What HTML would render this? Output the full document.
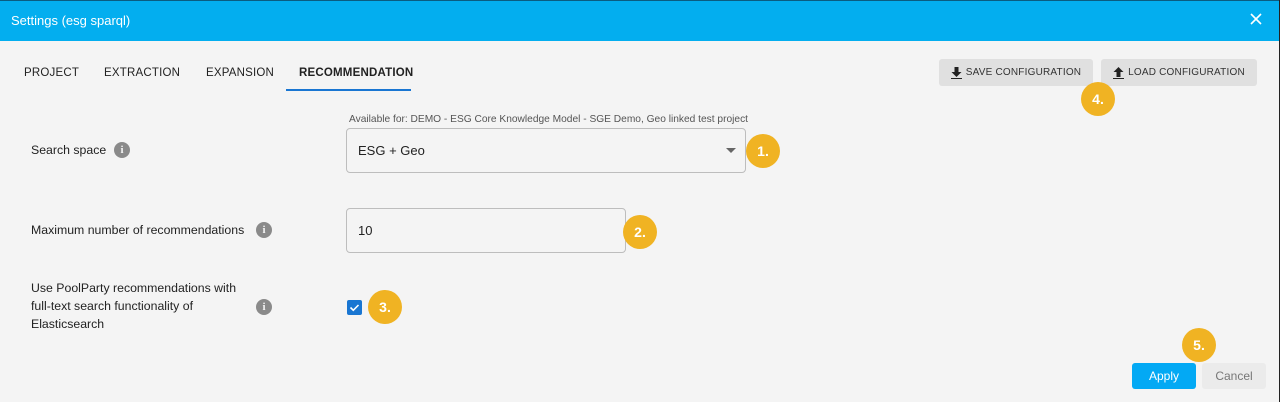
<!DOCTYPE html>
<html><head><style>
*{margin:0;padding:0;box-sizing:border-box}
body{width:1280px;height:402px;background:#f4f4f4;font-family:"Liberation Sans",Arial,sans-serif;position:relative;overflow:hidden;color:#222}
.a{position:absolute}
.hdr{left:0;top:0;width:1280px;height:41px;background:#03aeef;border-top:1px solid #0a5c80}
.tab{top:67px;font-size:11.5px;color:#222;letter-spacing:.2px}
.btn{top:59px;height:27px;background:#e0e0e0;border-radius:3px;font-size:10px;color:#333;display:flex;align-items:center;justify-content:center;gap:4px;letter-spacing:.2px}
.badge{width:34px;height:34px;border-radius:50%;background:#f0b323;color:#fff;font-weight:bold;font-size:14px;display:flex;align-items:center;justify-content:center}
.lbl{font-size:12.3px;color:#222;line-height:18px}
.info{width:16px;height:16px;border-radius:50%;background:#8a8a8a;color:#f4f4f4;font-size:11px;font-weight:bold;display:flex;align-items:center;justify-content:center;font-family:"Liberation Serif",serif}
.box{border:1px solid #bdbdbd;border-radius:4px;background:#f4f4f4;font-size:13px;padding-left:11px;display:flex;align-items:center}
</style></head><body>
<div class="a hdr"></div>
<div class="a" style="left:11px;top:13px;font-size:13px;color:#fff">Settings (esg sparql)</div>
<svg class="a" style="left:1250px;top:13px" width="12" height="12" viewBox="0 0 12 12"><path d="M1 1L11 11M11 1L1 11" stroke="#fff" stroke-width="1.6"/></svg>
<div class="a" style="left:1279px;top:0;width:1px;height:402px;background:#222"></div>

<div class="a tab" style="left:24px">PROJECT</div>
<div class="a tab" style="left:104px">EXTRACTION</div>
<div class="a tab" style="left:206px">EXPANSION</div>
<div class="a tab" style="left:299px;font-weight:bold">RECOMMENDATION</div>
<div class="a" style="left:286px;top:89px;width:125px;height:2px;background:#1976d2"></div>

<div class="a btn" style="left:939px;width:154px"><svg width="11" height="12" viewBox="0 0 11 12"><path d="M3.5 0h4v5h3l-5 5-5-5h3z M0 11h11v1H0z" fill="#222"/></svg>SAVE CONFIGURATION</div>
<div class="a btn" style="left:1101px;width:156px"><svg width="11" height="12" viewBox="0 0 11 12"><path d="M3.5 10h4V5h3l-5-5-5 5h3z M0 11h11v1H0z" fill="#222"/></svg>LOAD CONFIGURATION</div>
<div class="a badge" style="left:1081px;top:82px">4.</div>

<div class="a" style="left:349px;top:114px;font-size:10.2px;color:#555">Available for: DEMO - ESG Core Knowledge Model - SGE Demo, Geo linked test project</div>
<div class="a box" style="left:346px;top:128px;width:400px;height:45px">ESG + Geo</div>
<svg class="a" style="left:726px;top:148px" width="10" height="6"><path d="M0 0h10L5 5z" fill="#666"/></svg>
<div class="a badge" style="left:746px;top:134px">1.</div>

<div class="a box" style="left:346px;top:208px;width:280px;height:45px">10</div>
<div class="a badge" style="left:623px;top:215px">2.</div>

<div class="a" style="left:347px;top:300px;width:15px;height:15px;background:#1976d2;border-radius:2px"></div>
<svg class="a" style="left:347px;top:300px" width="15" height="15"><path d="M3.5 7.5l2.8 2.8L11.5 5" stroke="#fff" stroke-width="1.6" fill="none"/></svg>
<div class="a badge" style="left:368px;top:290px">3.</div>

<div class="a lbl" style="left:31px;top:141px">Search space</div>
<div class="a info" style="left:114px;top:142px">i</div>
<div class="a lbl" style="left:31px;top:221px">Maximum number of recommendations</div>
<div class="a info" style="left:256px;top:222px">i</div>
<div class="a lbl" style="left:31px;top:279px">Use PoolParty recommendations with<br>full-text search functionality of<br>Elasticsearch</div>
<div class="a info" style="left:256px;top:299px">i</div>

<div class="a badge" style="left:1182px;top:328px">5.</div>
<div class="a" style="left:1132px;top:363px;width:64px;height:26px;background:#03a9f4;border-radius:3px;color:#fff;font-size:12px;display:flex;align-items:center;justify-content:center">Apply</div>
<div class="a" style="left:1202px;top:363px;width:64px;height:26px;background:#ebebeb;border-radius:3px;color:#777;font-size:12px;display:flex;align-items:center;justify-content:center">Cancel</div>
</body></html>
